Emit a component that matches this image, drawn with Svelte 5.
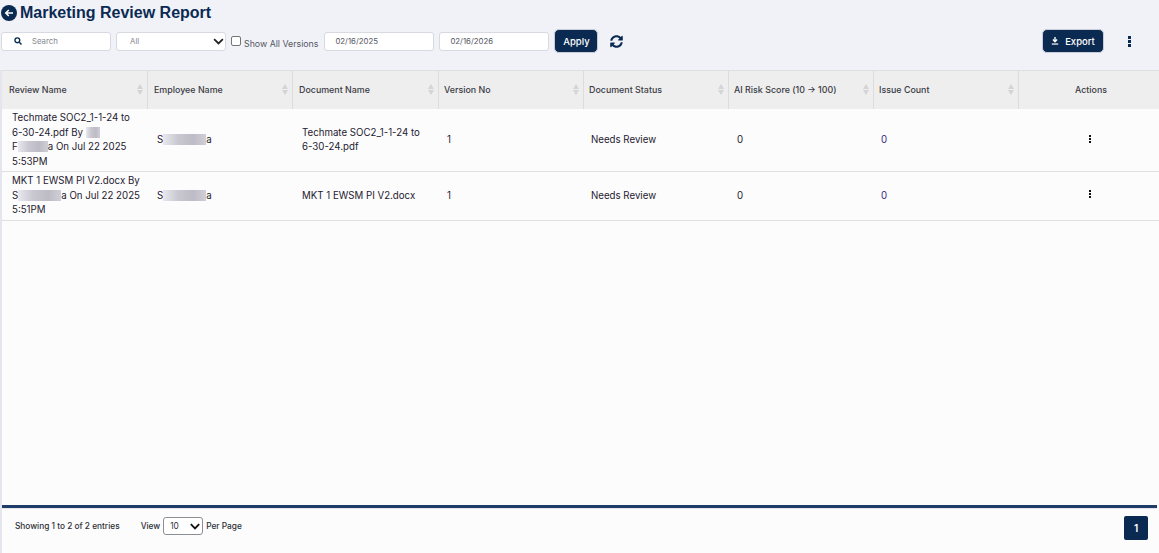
<script>
  const columns = [
    { label: 'Review Name', sort: true },
    { label: 'Employee Name', sort: true },
    { label: 'Document Name', sort: true },
    { label: 'Version No', sort: true },
    { label: 'Document Status', sort: true },
    { label: 'AI Risk Score (10 → 100)', sort: true },
    { label: 'Issue Count', sort: true },
    { label: 'Actions', sort: false }
  ];
</script>

<div class="page">
  <header class="title-row">
    <button class="back" aria-label="Back">
      <svg viewBox="0 0 16 16" width="16" height="16">
        <circle cx="8" cy="8" r="8" fill="#0b2a52" />
        <path d="M12 8H5M7.8 5 4.8 8l3 3" fill="none" stroke="#fff" stroke-width="1.6" />
      </svg>
    </button>
    <h1>Marketing Review Report</h1>
  </header>

  <div class="toolbar">
    <div class="search">
      <svg viewBox="0 0 12 12" width="8" height="8">
        <circle cx="5" cy="5" r="3.6" fill="none" stroke="#0b2a52" stroke-width="2" />
        <path d="M8 8l3.2 3.2" stroke="#0b2a52" stroke-width="2.2" />
      </svg>
      <span>Search</span>
    </div>
    <div class="select all">
      <span>All</span>
      <svg viewBox="0 0 12 8" width="11" height="7"><path d="M1 1.2l5 5 5-5" fill="none" stroke="#222" stroke-width="2" /></svg>
    </div>
    <label class="versions">
      <span class="check"></span>
      <span>Show All Versions</span>
    </label>
    <div class="date">02/16/2025</div>
    <div class="date">02/16/2026</div>
    <button class="btn apply">Apply</button>
    <svg class="refresh" viewBox="0 0 512 512" width="13" height="13">
      <path fill="#0b2a52" d="M370.7 133.3C339.5 104 298.9 88 255.8 88c-77.5 0-144.3 53.100-162.800 126.900-1.300 5.400-6.100 9.100-11.600 9.100H24.100c-7.500 0-13.200-6.800-11.800-14.200C33.900 94.900 134.800 8 256 8c66.400 0 126.800 26.100 171.300 68.700L463 41c15.100-15.100 41-4.400 41 17v134c0 13.300-10.700 24-24 24H346c-21.400 0-32.100-25.900-17-41l41.700-41.700zM32 296h134c21.400 0 32.100 25.900 17 41l-41.700 41.700c31.200 29.300 71.800 45.300 114.900 45.300 77.400 0 144.300-53.100 162.800-126.900 1.300-5.400 6.100-9.100 11.600-9.100h57.300c7.500 0 13.200 6.800 11.800 14.200C478.100 417.100 377.200 504 256 504c-66.400 0-126.800-26.100-171.300-68.700L49 471c-15.100 15.100-41 4.400-41-17V320c0-13.300 10.700-24 24-24z" />
    </svg>
    <div class="spacer"></div>
    <button class="btn export">
      <svg viewBox="0 0 10 10" width="8" height="8">
        <path d="M5 0v5M2.400 3.200 5 6l2.600-2.800" fill="none" stroke="#fff" stroke-width="1.700" />
        <path d="M1 8.800h8" stroke="#fff" stroke-width="1.500" />
      </svg>
      Export
    </button>
    <button class="more" aria-label="More">
      <i></i><i></i><i></i>
    </button>
  </div>

  <section class="panel">
    <div class="table-wrap">
      <table>
        <thead>
          <tr>
            {#each columns as col}
              <th class:center={!col.sort}>
                {col.label}
                {#if col.sort}
                  <span class="sort"><b class="up"></b><b class="down"></b></span>
                {/if}
              </th>
            {/each}
          </tr>
        </thead>
        <tbody>
          <tr>
            <td class="review">Techmate SOC2_1-1-24 to<br />6-30-24.pdf By <span class="blur short"></span><br />F<span class="blur mid"></span>a On Jul 22 2025<br />5:53PM</td>
            <td class="emp">S<span class="blur long"></span>a</td>
            <td class="doc">Techmate SOC2_1-1-24 to 6-30-24.pdf</td>
            <td class="ver">1</td>
            <td class="status">Needs Review</td>
            <td class="risk">0</td>
            <td class="issue">0</td>
            <td class="act"><span class="more small"><i></i><i></i><i></i></span></td>
          </tr>
          <tr>
            <td class="review">MKT 1 EWSM PI V2.docx By<br />S<span class="blur long"></span>a On Jul 22 2025<br />5:51PM</td>
            <td class="emp">S<span class="blur long"></span>a</td>
            <td class="doc">MKT 1 EWSM PI V2.docx</td>
            <td class="ver">1</td>
            <td class="status">Needs Review</td>
            <td class="risk">0</td>
            <td class="issue">0</td>
            <td class="act"><span class="more small"><i></i><i></i><i></i></span></td>
          </tr>
        </tbody>
      </table>
    </div>

    <div class="scrollbar"></div>

    <footer class="pager">
      <span class="entries">Showing 1 to 2 of 2 entries</span>
      <span class="view">View</span>
      <div class="select per">
        <span>10</span>
        <svg viewBox="0 0 12 8" width="10" height="7"><path d="M1 1.200l5 5 5-5" fill="none" stroke="#111" stroke-width="2.200" /></svg>
      </div>
      <span class="view">Per Page</span>
      <div class="spacer"></div>
      <button class="page-num">1</button>
    </footer>
  </section>
</div>

<style>
  :global(body) {
    margin: 0;
    background: #f1f2f8;
    font-family: Inter, "Liberation Sans", sans-serif;
  }

  .page {
    height: 553px;
    display: flex;
    flex-direction: column;
    overflow: hidden;
  }

  .title-row {
    height: 25px;
    display: flex;
    align-items: center;
    gap: 2px;
    padding-left: 1px;
  }

  .back {
    width: 16px;
    height: 16px;
    padding: 0;
    border: none;
    background: none;
    display: flex;
  }

  h1 {
    margin: 0 0 0 1px;
    color: #0b2a52;
    font-family: "Liberation Sans", Arial, sans-serif;
    font-size: 16px;
    font-weight: 700;
  }

  .toolbar {
    height: 28px;
    margin-top: 2px;
    display: flex;
    align-items: center;
    padding-left: 1px;
    padding-right: 26px;
  }

  .search, .select.all, .date {
    height: 17px;
    background: #fff;
    border: 1px solid #d8d9e1;
    border-radius: 3px;
    display: flex;
    align-items: center;
    font-size: 7.8px;
    color: #55575f;
  }

  .search {
    width: 96px;
    padding-left: 12px;
    gap: 10px;
    color: #85878f;
  }

  .select.all {
    width: 94px;
    margin-left: 5px;
    padding: 0 1px 0 13px;
    justify-content: space-between;
    color: #85878f;
  }

  .versions {
    display: flex;
    align-items: center;
    gap: 3px;
    margin-left: 5px;
    font-size: 8.800px;
    color: #55575f;
  }

  .versions span:last-child {
    margin-top: 4px;
  }

  .check {
    width: 8px;
    height: 8px;
    border: 1px solid #767676;
    border-radius: 2px;
    background: #fff;
  }

  .date {
    width: 98px;
    padding-left: 10px;
    margin-left: 5px;
  }

  .versions + .date {
    margin-left: 6px;
  }

  .btn {
    background: #0b2a52;
    color: #fff;
    border: 1px solid #c9cbd6;
    border-radius: 5px;
    font-family: inherit;
    font-size: 9.500px;
    font-weight: 500;
    height: 24px;
    box-sizing: border-box;
    display: flex;
    align-items: center;
    justify-content: center;
  }

  .apply {
    width: 44px;
    margin-left: 5px;
  }

  .refresh {
    margin-left: 12px;
  }

  .spacer {
    flex: 1;
  }

  .export {
    width: 62px;
    gap: 6px;
  }

  .more {
    display: flex;
    flex-direction: column;
    align-items: center;
    gap: 1.500px;
    padding: 0;
    border: none;
    background: none;
    margin: 1px 0 0 21px;
    width: 8px;
  }

  .more i {
    width: 3px;
    height: 2.500px;
    background: #0b2a52;
    display: block;
  }

  .more.small {
    margin: -3px auto 0;
    gap: 1px;
  }

  .more.small i {
    width: 2.500px;
    height: 2px;
    background: #111;
  }

  .panel {
    flex: 1;
    margin-top: 15px;
    background: #fcfcfc;
    border-left: 2px solid #e4e5ee;
    border-top: 1px solid #dedfe3;
    display: flex;
    flex-direction: column;
    min-height: 0;
  }

  .table-wrap {
    flex: 1;
    min-height: 0;
  }

  table {
    width: 100%;
    table-layout: fixed;
    border-collapse: separate;
    border-spacing: 0;
    font-size: 9.700px;
    color: #1e2030;
  }

  th {
    height: 38px;
    background: #eeeeee;
    border-right: 1px solid #dcdcdc;
    padding: 0 6px 2px;
    text-align: left;
    font-weight: 500;
    font-size: 8.900px;
    color: #3a3b44;
    position: relative;
    width: 145px;
    box-sizing: border-box;
  }

  th:first-child {
    width: 146px;
    padding-left: 7px;
  }

  th:nth-child(3) {
    width: 146px;
  }

  th:nth-child(n+4) {
    padding-left: 5px;
  }

  th:last-child {
    border-right: none;
    width: auto;
    padding-left: 10px;
  }

  th.center {
    text-align: center;
  }

  .sort {
    position: absolute;
    right: 4px;
    top: 13px;
    display: flex;
    flex-direction: column;
    gap: 1px;
  }

  .sort b {
    width: 0;
    height: 0;
    border-left: 3.500px solid transparent;
    border-right: 3.500px solid transparent;
  }

  .sort .up {
    border-bottom: 5px solid #d4d4d6;
  }

  .sort .down {
    border-top: 5px solid #d4d4d6;
  }

  td {
    border-bottom: 1px solid #dedfe3;
    padding: 0 8px;
    line-height: 14.500px;
    vertical-align: middle;
  }

  td.review {
    padding: 2px 4px 2px 10px;
  }

  td.emp {
    padding-left: 9px;
  }

  td.doc {
    padding-left: 9px;
    padding-right: 16px;
    line-height: 14px;
  }

  td.status, td.issue {
    padding-left: 7px;
  }

  td.issue {
    color: #3a1d80;
  }

  td.act {
    text-align: center;
    padding-left: 10px;
  }

  .blur {
    display: inline-block;
    height: 11px;
    vertical-align: -2px;
    background: linear-gradient(90deg, #e9e8ee, #c9c7d0 35%, #bdbbc5 70%, #d0ced6);
  }

  .blur.short {
    width: 14px;
  }

  .blur.mid {
    width: 30px;
  }

  .blur.long {
    width: 43px;
  }

  .scrollbar {
    height: 3px;
    background: #1f3d68;
    margin-right: 2px;
    border-bottom: 1px solid #e4e5ee;
  }

  .pager {
    height: 44px;
    box-sizing: border-box;
    display: flex;
    align-items: flex-start;
    padding: 7px 11px 0 13px;
    font-size: 8.300px;
    color: #2e3038;
    font-weight: 500;
  }

  .entries, .view {
    line-height: 18px;
    margin-top: 1px;
  }

  .entries {
    margin-right: 21px;
  }

  .select.per {
    width: 40px;
    height: 18px;
    box-sizing: border-box;
    border: 1px solid #8d8e94;
    border-radius: 3px;
    background: #fff;
    margin: 1px 3px 0;
    padding: 0 2px 0 6px;
    display: flex;
    align-items: center;
    justify-content: space-between;
    font-weight: 400;
  }

  .page-num {
    width: 24px;
    height: 24px;
    border: none;
    border-radius: 2px;
    background: #0b2a52;
    color: #fff;
    font-family: inherit;
    font-size: 10px;
    font-weight: 600;
  }
</style>
